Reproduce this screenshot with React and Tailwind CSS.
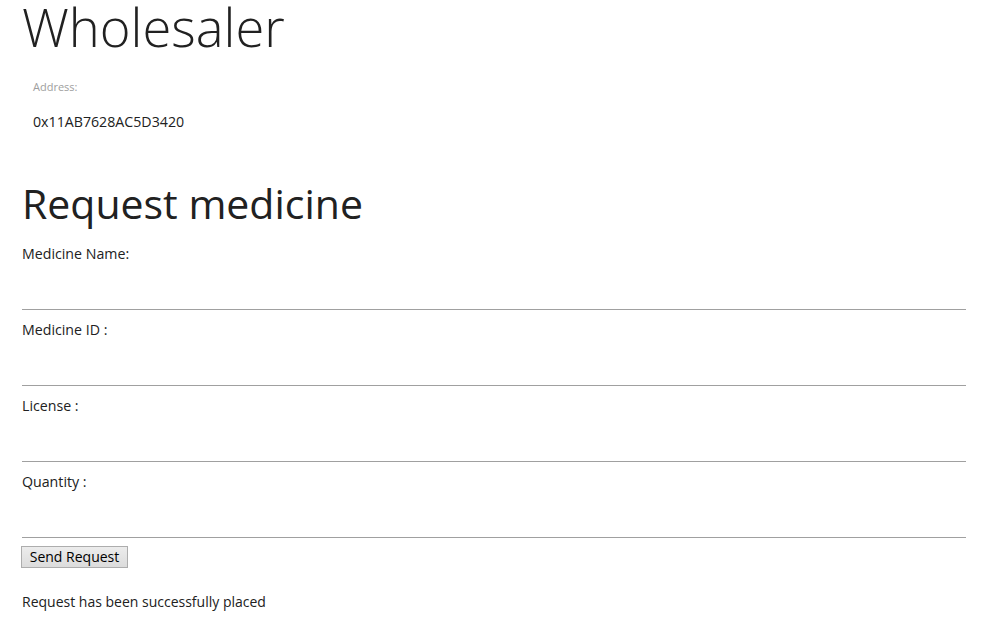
export default function App() {
  const fields = ["Medicine Name:", "Medicine ID :", "License :", "Quantity :"];
  return (
    <div className="min-h-[618px] bg-white pl-[22px] pr-[19px] text-[#212121]" style={{ fontFamily: '"Open Sans", "Noto Sans", sans-serif' }}>
      <h1 className="m-0 text-[52.5px] font-[350] leading-[53px] text-[#212121]">Wholesaler</h1>
      <div className="pl-[11px] pt-[27px]">
        <div className="text-[11px] leading-[14px] text-[#9e9e9e]">Address:</div>
        <div className="pt-[18px] text-[14.2px] leading-[20px] text-[#212121]">0x11AB7628AC5D3420</div>
      </div>
      <h2 className="mt-[47px] text-[41px] font-normal leading-[48px] text-[#212121]">Request medicine</h2>
      <div className="mt-[7px] flex flex-col">
        {fields.map((f) => (
          <div key={f} className="flex flex-col pt-[10px]">
            <label className="text-[14.2px] leading-[20px]">{f}</label>
            <input className="h-[46px] border-0 border-b border-[#a0a0a0] bg-transparent outline-none" />
          </div>
        ))}
      </div>
      <button className="mt-[8px] ml-[-1px] h-[22px] w-[107px] border border-[#adadad] bg-gradient-to-b from-[#ececec] to-[#dcdcdc] text-[14px] leading-[20px] text-black">Send Request</button>
      <p className="mt-[24px] text-[14px] leading-[20px]">Request has been successfully placed</p>
    </div>
  );
}
